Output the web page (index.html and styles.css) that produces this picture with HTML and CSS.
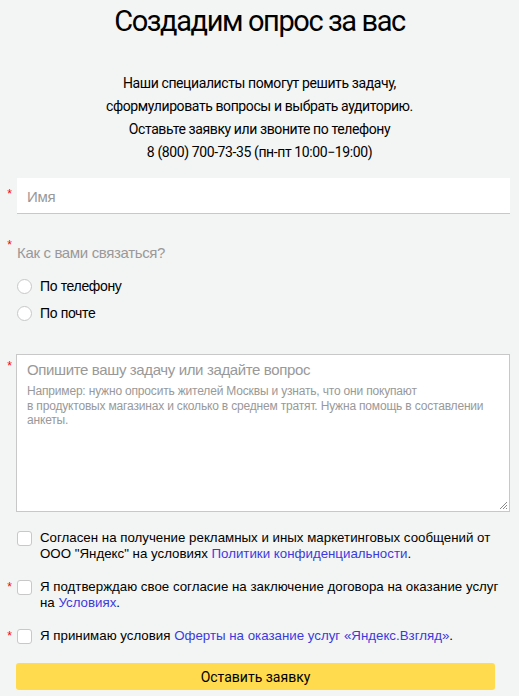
FILE: index.html
```html
<!DOCTYPE html>
<html lang="ru">
<head>
<meta charset="utf-8">
<title>Создадим опрос за вас</title>
<link rel="stylesheet" href="styles.css">
</head>
<body>
<main class="page">
  <h1 class="title">Создадим опрос за вас</h1>
  <p class="lead">Наши специалисты помогут решить задачу,<br>сформулировать вопросы и выбрать аудиторию.<br>Оставьте заявку или звоните по телефону<br>8 (800) 700-73-35 (пн-пт 10:00−19:00)</p>

  <form class="form">
    <div class="row row-name">
      <span class="req req-mid">*</span>
      <div class="input"><span class="placeholder">Имя</span></div>
    </div>

    <div class="row row-label">
      <span class="req req-top">*</span>
      <div class="label">Как с вами связаться?</div>
    </div>

    <div class="row row-radio">
      <span></span>
      <label class="radio"><span class="circle"></span><span>По телефону</span></label>
    </div>
    <div class="row row-radio2">
      <span></span>
      <label class="radio"><span class="circle"></span><span>По почте</span></label>
    </div>

    <div class="row row-area">
      <span class="req req-area">*</span>
      <div class="textarea">
        <div class="area-title">Опишите вашу задачу или задайте вопрос</div>
        <div class="area-hint">Например: нужно опросить жителей Москвы и узнать, что они покупают<br>в продуктовых магазинах и сколько в среднем тратят. Нужна помощь в составлении анкеты.</div>
        <svg class="grip" width="9" height="9" viewBox="0 0 9 9"><path d="M8 1 L1 8 M8 4 L4 8 M8 7 L7 8" stroke="#8a8a8a" stroke-width="1"/></svg>
      </div>
    </div>

    <div class="row row-check1">
      <span></span>
      <label class="check"><span class="box"></span><span class="check-text">Согласен на получение рекламных и иных маркетинговых сообщений от ООО "Яндекс" на условиях <a href="#">Политики конфиденциальности</a>.</span></label>
    </div>

    <div class="row row-check2">
      <span class="req req-check">*</span>
      <label class="check"><span class="box"></span><span class="check-text">Я подтверждаю свое согласие на заключение договора на оказание услуг на <a href="#">Условиях</a>.</span></label>
    </div>

    <div class="row row-check3">
      <span class="req req-check">*</span>
      <label class="check"><span class="box"></span><span class="check-text">Я принимаю условия <a href="#">Оферты на оказание услуг «Яндекс.Взгляд»</a>.</span></label>
    </div>

    <div class="row row-btn">
      <span></span>
      <button type="button" class="submit">Оставить заявку</button>
    </div>
  </form>
</main>
</body>
</html>
```
FILE: styles.css
```css
html, body {
  margin: 0;
  padding: 0;
  background: #f3f4f4;
}
body {
  font-family: "Liberation Sans", Arial, sans-serif;
  color: #000;
}
.page {
  padding: 3px 9px 0 0;
}
.title {
  margin: 0;
  font-family: Roboto, "Noto Sans", sans-serif;
  font-weight: 400;
  font-size: 29px;
  letter-spacing: -1.4px;
  line-height: 36px;
  text-align: center;
  padding-left: 9px;
}
.lead {
  margin: 33px 0 0;
  font-family: Roboto, "Noto Sans", sans-serif;
  font-size: 14px;
  letter-spacing: -0.4px;
  line-height: 23px;
  text-align: center;
  padding-left: 9px;
}
.form {
  margin-top: 14px;
  display: flex;
  flex-direction: column;
  letter-spacing: -0.35px;
}
.row {
  display: grid;
  grid-template-columns: 17px 1fr;
}
.req {
  color: #f00;
  font-size: 12px;
  line-height: 12px;
  text-align: right;
  padding-right: 5px;
  letter-spacing: 0;
}
.req-mid { padding-top: 10px; }
.req-top { padding-top: 0; }
.req-area { padding-top: 6px; }
.req-check { padding-top: 2px; }

.input {
  background: #fff;
  border-bottom: 1px solid #c8c8c8;
  display: flex;
  align-items: center;
  padding-left: 10px;
  padding-top: 2px;
  box-sizing: border-box;
  height: 36px;
}
.placeholder {
  font-size: 15px;
  color: #999;
}
.row-label { margin-top: 25px; }
.label {
  font-size: 15px;
  line-height: 20px;
  color: #999;
  padding-top: 4px;
}
.row-radio { margin-top: 13px; }
.row-radio2 { margin-top: 7px; }
.radio {
  display: flex;
  align-items: center;
  gap: 8px;
  font-size: 14px;
  line-height: 20px;
}
.circle {
  width: 13px;
  height: 13px;
  border: 1px solid #c8c8c8;
  border-radius: 50%;
  background: #fff;
  flex: none;
}
.row-area { margin-top: 31px; }
.textarea {
  position: relative;
  height: 158px;
  margin-left: -1px;
  border: 1px solid #c8c8c8;
  background: #fff;
  box-sizing: border-box;
  padding: 6px 10px;
  color: #999;
}
.area-title {
  font-size: 15px;
  line-height: 18px;
  letter-spacing: -0.37px;
}
.area-hint {
  margin-top: 5px;
  font-size: 12px;
  line-height: 14.5px;
  letter-spacing: -0.18px;
}
.grip {
  position: absolute;
  right: 1px;
  bottom: 1px;
}
.row-check1 { margin-top: 18px; }
.row-check2 { margin-top: 17px; }
.row-check3 { margin-top: 17px; }
.check {
  display: flex;
  align-items: flex-start;
  gap: 8px;
  font-size: 13.3px;
  letter-spacing: 0;
  line-height: 16px;
}
.box {
  flex: none;
  width: 13px;
  height: 13px;
  margin-top: 1px;
  border: 1px solid #c8c8c8;
  border-radius: 3px;
  background: #fff;
}
.check a {
  color: #3b3bdc;
  text-decoration: none;
}
.row-btn { margin-top: 19px; }
.submit {
  margin-left: -1px;
  margin-right: 15px;
  height: 27px;
  border: 0;
  border-radius: 3px;
  background: #ffdb4d;
  font-family: Roboto, "Noto Sans", sans-serif;
  font-size: 14px;
  color: #000;
  padding: 0;
}
```
